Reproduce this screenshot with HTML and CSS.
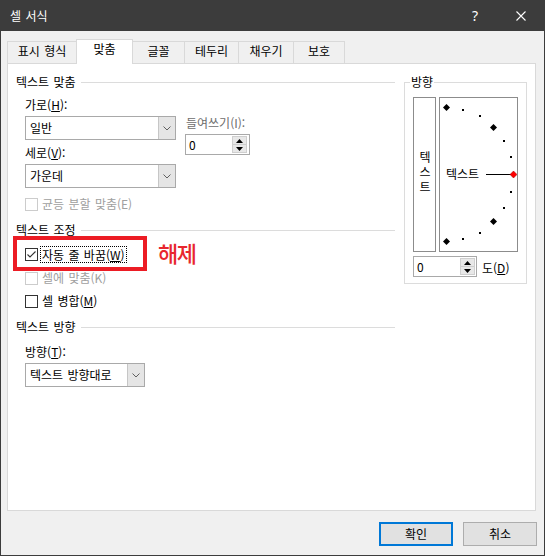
FILE: index.html
```html
<!DOCTYPE html>
<html lang="ko">
<head>
<meta charset="utf-8">
<title>셀 서식</title>
<link rel="stylesheet" href="styles.css">
</head>
<body>
<div class="window">
  <div class="titlebar">
    <span class="title">셀 서식</span>
    <span class="cap-btn help">?</span>
    <span class="cap-btn close"><svg width="10" height="10" viewBox="0 0 10 10"><path d="M0.5 0.5L9.5 9.5M9.5 0.5L0.5 9.5" stroke="#fff" stroke-width="1.1" fill="none"/></svg></span>
  </div>
  <div class="body">
    <div class="tabs">
      <div class="tab t-number">표시 형식</div>
      <div class="tab active">맞춤</div>
      <div class="tab t-font">글꼴</div>
      <div class="tab t-border">테두리</div>
      <div class="tab t-fill">채우기</div>
      <div class="tab t-protect last">보호</div>
    </div>
    <div class="panel">
      <div class="left">
        <div class="header">텍스트 맞춤</div>
        <div class="indent">
          <div class="align-row">
            <div class="col-a">
              <div class="label first-label">가로(<u>H</u>):</div>
              <div class="combo">
                <span class="combo-text">일반</span>
                <span class="combo-btn"><svg width="8" height="5" viewBox="0 0 8 5"><path d="M0.5 0.5L4 4L7.5 0.5" stroke="#606060" fill="none"/></svg></span>
              </div>
              <div class="label next-label">세로(<u>V</u>):</div>
              <div class="combo">
                <span class="combo-text">가운데</span>
                <span class="combo-btn"><svg width="8" height="5" viewBox="0 0 8 5"><path d="M0.5 0.5L4 4L7.5 0.5" stroke="#606060" fill="none"/></svg></span>
              </div>
            </div>
            <div class="col-b">
              <div class="label dim">들여쓰기(I):</div>
              <div class="spin indent-spin">
                <span class="spin-val">0</span>
                <span class="spin-btns">
                  <span class="spin-btn"><svg width="7" height="4" viewBox="0 0 7 4"><path d="M0 4L3.5 0L7 4Z" fill="#000"/></svg></span>
                  <span class="spin-btn"><svg width="7" height="4" viewBox="0 0 7 4"><path d="M0 0L7 0L3.5 4Z" fill="#000"/></svg></span>
                </span>
              </div>
            </div>
          </div>
          <div class="check disabled justify-row"><span class="box"></span><span>균등 분할 맞춤(E)</span></div>
        </div>

        <div class="header sec-gap">텍스트 조정</div>
        <div class="indent">
          <div class="check wrap-row">
            <span class="box checked"><svg width="11" height="11" viewBox="0 0 11 11"><path d="M1.5 5.5L4 8L9.5 2.5" stroke="#333" stroke-width="1.1" fill="none"/></svg></span>
            <span class="focus">자동 줄 바꿈(<u>W</u>)</span>
            <span class="annot-box"></span>
            <span class="annot-text">해제</span>
          </div>
          <div class="check disabled shrink-row"><span class="box"></span><span>셀에 맞춤(K)</span></div>
          <div class="check merge-row"><span class="box"></span><span>셀 병합(<u>M</u>)</span></div>
        </div>

        <div class="header sec-gap">텍스트 방향</div>
        <div class="indent">
          <div class="label dir-label">방향(<u>T</u>):</div>
          <div class="combo dir-combo">
            <span class="combo-text">텍스트 방향대로</span>
            <span class="combo-btn"><svg width="8" height="5" viewBox="0 0 8 5"><path d="M0.5 0.5L4 4L7.5 0.5" stroke="#606060" fill="none"/></svg></span>
          </div>
        </div>
      </div>

      <fieldset class="group">
        <legend>방향</legend>
        <div class="group-inner">
          <div class="dir-row">
            <div class="vbox"><span class="vtext">텍스트</span></div>
            <div class="dial">
              <svg width="77" height="153" viewBox="0 0 77 153">
                <g fill="#000">
                  <polygon points="6.5,6 10,9.5 6.5,13 3,9.5"/>
                  <rect x="22" y="11" width="2" height="2"/>
                  <rect x="39" y="17" width="2" height="2"/>
                  <polygon points="53.5,26 57,29.5 53.5,33 50,29.5"/>
                  <rect x="63" y="42" width="2" height="2"/>
                  <rect x="70" y="58" width="2" height="2"/>
                  <rect x="70" y="93" width="2" height="2"/>
                  <rect x="63" y="109" width="2" height="2"/>
                  <polygon points="53.5,120 57,123.5 53.5,127 50,123.5"/>
                  <rect x="39" y="134" width="2" height="2"/>
                  <rect x="22" y="140" width="2" height="2"/>
                  <polygon points="6.5,140 10,143.5 6.5,147 3,143.5"/>
                </g>
                <line x1="46" y1="76.5" x2="71" y2="76.5" stroke="#000" stroke-width="1"/>
                <polygon points="73.5,73 77,76.5 73.5,80 70,76.5" fill="#f00" stroke="#900" stroke-width="0.5"/>
                <text x="6" y="81" font-size="12" font-family="Noto Sans CJK KR, sans-serif" fill="#000">텍스트</text>
              </svg>
            </div>
          </div>
          <div class="deg-row">
            <div class="spin deg-spin">
              <span class="spin-val">0</span>
              <span class="spin-btns">
                <span class="spin-btn"><svg width="7" height="4" viewBox="0 0 7 4"><path d="M0 4L3.5 0L7 4Z" fill="#000"/></svg></span>
                <span class="spin-btn"><svg width="7" height="4" viewBox="0 0 7 4"><path d="M0 0L7 0L3.5 4Z" fill="#000"/></svg></span>
              </span>
            </div>
            <span class="deg-label">도(<u>D</u>)</span>
          </div>
        </div>
      </fieldset>
    </div>
    <div class="footer">
      <div class="btn default">확인</div>
      <div class="btn">취소</div>
    </div>
  </div>
</div>
</body>
</html>
```

FILE: styles.css
```css
* { box-sizing: border-box; }
html, body { margin: 0; padding: 0; background: #f0f0f0; }
body {
  font-family: "Noto Sans CJK KR", "Noto Sans", sans-serif;
  font-size: 12px;
  line-height: 16px;
  color: #000;
  word-spacing: 1px;
}
u { text-underline-offset: 1px; }

.window {
  width: 545px;
  height: 556px;
  border: 1px solid #3c3c3c;
  background: #f0f0f0;
  display: flex;
  flex-direction: column;
}

.titlebar {
  height: 30px;
  flex-shrink: 0;
  background: #3c3c3c;
  color: #fff;
  display: flex;
  align-items: center;
}
.title { flex: 1; padding-left: 9px; }
.cap-btn {
  width: 46px;
  height: 30px;
  display: flex;
  align-items: center;
  justify-content: center;
}
.help { font-family: "Noto Sans", sans-serif; font-size: 14px; }

.body {
  flex: 1;
  display: flex;
  flex-direction: column;
  padding: 8px 8px 0 6px;
}

.tabs {
  display: flex;
  align-items: flex-end;
  height: 24px;
}
.tab {
  flex: none;
  height: 22px;
  padding: 1px 0 0;
  border-top: 1px solid #d9d9d9;
  border-left: 1px solid #d9d9d9;
  text-align: center;
  white-space: nowrap;
}
.t-number { width: 69px; }
.t-font { width: 51px; }
.t-border { width: 54px; }
.t-fill { width: 55px; }
.t-protect { width: 52px; }
.tab.last { border-right: 1px solid #d9d9d9; }
.tab.active {
  position: relative;
  z-index: 1;
  height: 25px;
  width: 57px;
  margin-bottom: -1px;
  background: #fff;
  border-right: 1px solid #d9d9d9;
}
.tab.active + .tab { border-left: none; }

.panel {
  height: 448px;
  background: #fff;
  border: 1px solid #d9d9d9;
  display: flex;
  align-items: flex-start;
  padding: 10px 0 0 8px;
}

.left { width: 379px; }
.header {
  display: flex;
  align-items: center;
  height: 16px;
  white-space: nowrap;
}
.header::after {
  content: "";
  flex: 1;
  height: 1px;
  background: #dcdcdc;
  margin-left: 5px;
}
.sec-gap { margin-top: 10px; }
.indent { padding-left: 9px; }

.align-row { display: flex; }
.col-a { width: 151px; }
.col-b { margin-left: 9px; padding-top: 25px; }
.label { height: 16px; white-space: nowrap; }
.first-label { margin-top: 7px; }
.next-label { margin-top: 5px; }
.col-b .label { padding-left: 1px; }
.dim { color: #6d6d6d; }

.combo {
  display: flex;
  height: 24px;
  margin-top: 3px;
  border: 1px solid #a9a9a9;
  background: #fff;
}
.combo-text {
  flex: 1;
  padding-left: 4px;
  line-height: 22px;
  white-space: nowrap;
}
.combo-btn {
  width: 17px;
  background: #e5e5e5;
  border-left: 1px solid #c6c6c6;
  display: flex;
  align-items: center;
  justify-content: center;
}
.combo-btn svg { display: block; }
.dir-label { margin-top: 9px; }
.dir-combo { width: 120px; }

.spin {
  display: flex;
  height: 21px;
  border: 1px solid #a9a9a9;
  background: #fff;
}
.indent-spin { width: 65px; margin-top: 3px; }
.deg-spin { width: 64px; }
.spin-val { flex: 1; padding-left: 3px; line-height: 19px; }
.spin-btns {
  display: flex;
  flex-direction: column;
  width: 15px;
  margin: 1px 2px 1px 0;
}
.deg-spin .spin-btns { margin-right: 1px; }
.spin-btn {
  flex: 1;
  background: #e8e8e8;
  border: 1px solid #cfcfcf;
  display: flex;
  align-items: center;
  justify-content: center;
}
.spin-btn + .spin-btn { border-top: none; }
.spin-btn svg { display: block; }

.check {
  display: flex;
  align-items: center;
  height: 16px;
  white-space: nowrap;
}
.box {
  width: 13px;
  height: 13px;
  flex-shrink: 0;
  border: 1px solid #333;
  background: #fff;
  margin-right: 4px;
  display: flex;
  align-items: center;
  justify-content: center;
}
.box svg { display: block; }
.check.disabled { color: #a0a0a0; }
.check.disabled .box { border-color: #cccccc; }
.justify-row { margin-top: 8px; }
.wrap-row { margin-top: 8px; position: relative; }
.shrink-row { margin-top: 8px; }
.merge-row { margin-top: 7px; }

.focus {
  margin-left: -2px;
  padding: 0 1px;
  border: 1px dotted #000;
  line-height: 15px;
}
.annot-box {
  position: absolute;
  left: -12px;
  top: -10px;
  width: 134px;
  height: 35px;
  border: 4px solid #ec1c24;
}
.annot-text {
  position: absolute;
  left: 133px;
  top: -6px;
  font-size: 22px;
  line-height: 24px;
  font-weight: 500;
  color: #e8262e;
  letter-spacing: -1.5px;
}

.group {
  margin: 0 0 0 9px;
  padding: 0;
  width: 123px;
  min-width: 0;
  border: 1px solid #dcdcdc;
}
.group legend {
  padding: 0 1px;
  margin-left: 5px;
  line-height: 16px;
}
.group-inner { padding: 7px 8px 6px 8px; }
.dir-row { display: flex; }
.vbox {
  width: 24px;
  height: 155px;
  border: 1px solid #8c8c8c;
  display: flex;
  align-items: center;
  justify-content: center;
  padding-bottom: 3px;
}
.vtext {
  writing-mode: vertical-rl;
  text-orientation: upright;
  letter-spacing: 3px;
  line-height: 16px;
  word-spacing: 0;
}
.dial {
  width: 79px;
  height: 155px;
  margin-left: 3px;
  border: 1px solid #8c8c8c;
}
.dial svg { display: block; }
.deg-row {
  display: flex;
  align-items: center;
  margin-top: 4px;
}
.deg-label { margin-left: 5px; padding-top: 2px; }

.footer {
  display: flex;
  justify-content: flex-end;
  gap: 10px;
  padding-top: 11px;
  margin-right: -1px;
}
.btn {
  width: 74px;
  height: 24px;
  background: #e1e1e1;
  border: 1px solid #adadad;
  display: flex;
  align-items: center;
  justify-content: center;
}
.btn.default { border: 2px solid #0078d7; }
```
